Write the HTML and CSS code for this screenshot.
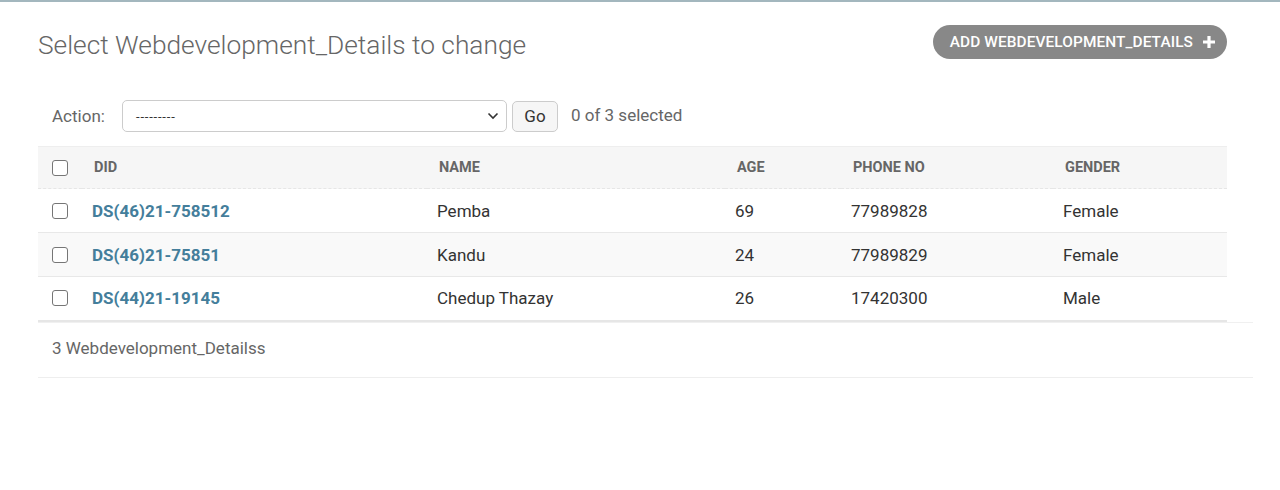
FILE: index.html
```html
<!DOCTYPE html>
<html lang="en">
<head>
<meta charset="utf-8">
<title>Select Webdevelopment_Details to change</title>
<link rel="stylesheet" href="styles.css">
</head>
<body>
<div class="topbar"></div>
<main class="content">
  <div class="head">
    <h1 class="title">Select Webdevelopment_Details to change</h1>
    <a class="addlink" href="#">ADD WEBDEVELOPMENT_DETAILS
      <svg class="plus" viewBox="0 0 12 12" width="12" height="12"><path d="M4.4 0h3.2v4.4H12v3.2H7.6V12H4.4V7.6H0V4.4h4.4z" fill="#fff"/></svg>
    </a>
  </div>
  <div class="actions">
    <label class="action-label">Action:</label>
    <div class="select">
      <span class="select-val">---------</span>
      <svg class="chev" viewBox="0 0 12 8" width="12" height="8"><path d="M1.5 1.5l4.5 4.5 4.5-4.5" fill="none" stroke="#333" stroke-width="1.6"/></svg>
    </div>
    <button class="go">Go</button>
    <span class="counter">0 of 3 selected</span>
  </div>
  <table class="results">
    <thead>
      <tr>
        <th class="c-check"><span class="cb"></span></th>
        <th class="c-did">DID</th>
        <th class="c-name">NAME</th>
        <th class="c-age">AGE</th>
        <th class="c-phone">PHONE NO</th>
        <th class="c-gender">GENDER</th>
      </tr>
    </thead>
    <tbody>
      <tr>
        <td class="c-check"><span class="cb"></span></td>
        <td><a href="#">DS(46)21-758512</a></td>
        <td>Pemba</td>
        <td>69</td>
        <td>77989828</td>
        <td>Female</td>
      </tr>
      <tr class="alt">
        <td class="c-check"><span class="cb"></span></td>
        <td><a href="#">DS(46)21-75851</a></td>
        <td>Kandu</td>
        <td>24</td>
        <td>77989829</td>
        <td>Female</td>
      </tr>
      <tr>
        <td class="c-check"><span class="cb"></span></td>
        <td><a href="#">DS(44)21-19145</a></td>
        <td>Chedup Thazay</td>
        <td>26</td>
        <td>17420300</td>
        <td>Male</td>
      </tr>
    </tbody>
  </table>
  <p class="paginator">3 Webdevelopment_Detailss</p>
</main>
</body>
</html>
```
FILE: styles.css
```css
* { box-sizing: border-box; }
body {
  margin: 0;
  background: #fff;
  font-family: Roboto, "Liberation Sans", sans-serif;
  color: #333;
}
.topbar {
  height: 2px;
  background: #a3b7be;
}
.content {
  width: 1215px;
  margin-left: 38px;
}
.head {
  display: flex;
  justify-content: space-between;
  align-items: flex-start;
  width: 1189px;
  padding-top: 23px;
}
.title {
  margin: 3px 0 0;
  font-size: 26.3px;
  font-weight: 300;
  color: #666;
  line-height: 34px;
}
.addlink {
  display: flex;
  align-items: center;
  gap: 10px;
  height: 34px;
  padding: 0 12px 0 17px;
  border-radius: 17px;
  background: #888;
  color: #fff;
  text-decoration: none;
  font-size: 15.4px;
  font-weight: 500;
  letter-spacing: 0.1px;
}
.plus { display: block; }
.actions {
  display: flex;
  align-items: center;
  margin-top: 38px;
  padding-left: 14px;
  height: 32px;
}
.action-label {
  font-size: 17px;
  color: #666;
  width: 70px;
}
.select {
  display: flex;
  align-items: center;
  justify-content: space-between;
  width: 385px;
  height: 32px;
  border: 1px solid #ccc;
  border-radius: 5px;
  padding: 0 7px 0 13px;
  font-size: 13px;
  color: #333;
}
.select-val { letter-spacing: 0.8px; }
.go {
  margin-left: 5px;
  height: 31px;
  width: 46px;
  border: 1px solid #ccc;
  border-radius: 5px;
  background: #f6f6f6;
  font-family: inherit;
  font-size: 17px;
  color: #333;
  padding: 0;
}
.counter {
  margin-left: 13px;
  font-size: 17px;
  color: #666;
  margin-top: -2px;
}
.results {
  margin-top: 14px;
  width: 1189px;
  border-collapse: collapse;
  table-layout: fixed;
}
.results th, .results td {
  text-align: left;
  padding: 0 10px;
  white-space: nowrap;
}
.results th { padding-left: 12px; }
.results thead tr {
  height: 42px;
  background: #f6f6f6;
  border-top: 1px solid #eee;
  border-bottom: 1px dashed #e6e6e6;
}
.results th {
  font-size: 14.5px;
  font-weight: 700;
  color: #666;
}
.results tbody tr {
  height: 44px;
  border-bottom: 1px solid #e8e8e8;
}
.results tbody tr:last-child { border-bottom: 2px solid #e6e6e6; }
.results tbody tr.alt { background: #f9f9f9; }
.results td {
  font-size: 17px;
  color: #333;
}
.results td a {
  color: #447e9b;
  font-weight: 700;
  text-decoration: none;
}
.c-check { width: 44px; padding-left: 14px !important; }
.c-did { width: 345px; }
.c-name { width: 298px; }
.c-age { width: 116px; }
.c-phone { width: 212px; }
.cb {
  display: block;
  width: 16px;
  height: 16px;
  border: 1.5px solid #767676;
  border-radius: 3px;
  background: #fff;
}
.paginator {
  margin: 0;
  height: 56px;
  padding: 0 0 4px 14px;
  display: flex;
  align-items: center;
  font-size: 17px;
  color: #666;
  border-top: 1px solid #f0f0f0;
  border-bottom: 1px solid #eee;
}
```
